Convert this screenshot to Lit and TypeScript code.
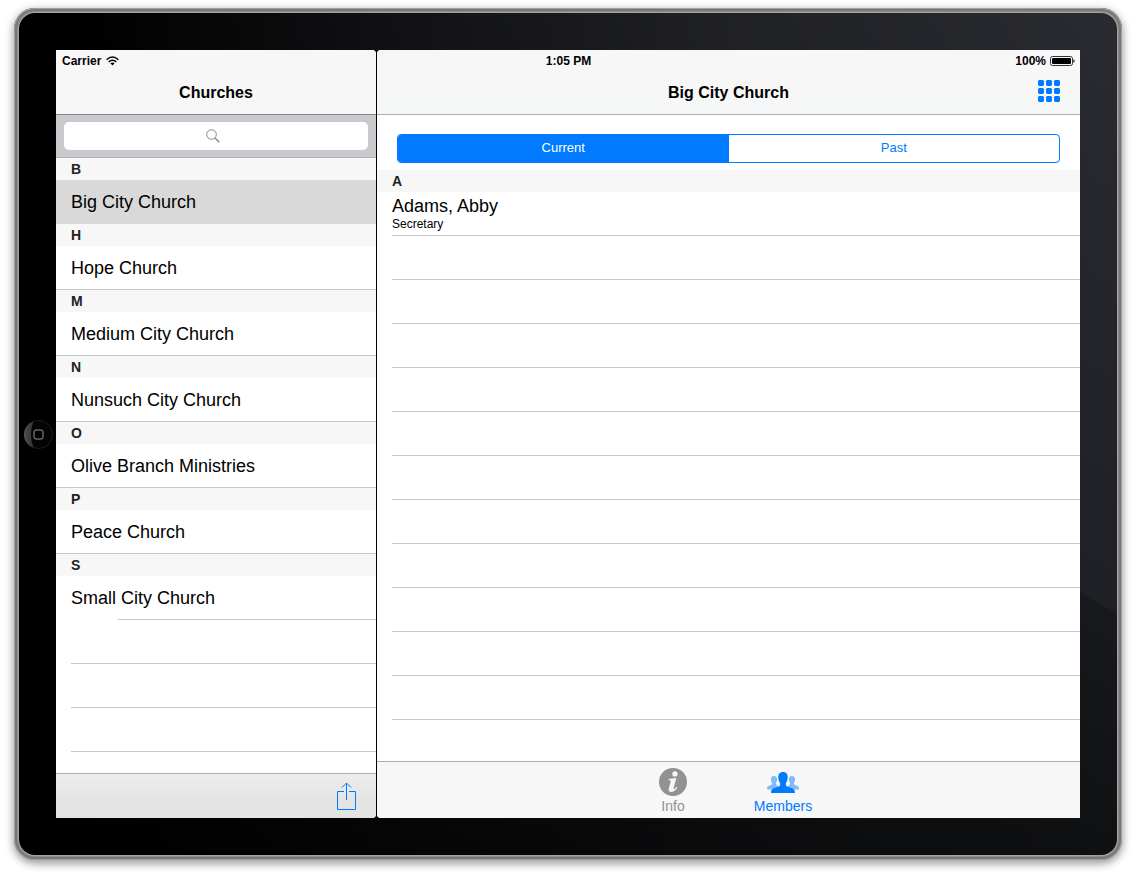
import { LitElement, html, css, nothing } from "lit";
import { customElement, state } from "lit/decorators.js";
import { classMap } from "lit/directives/class-map.js";

const CHURCHES = [
  { letter: "B", name: "Big City Church" },
  { letter: "H", name: "Hope Church" },
  { letter: "M", name: "Medium City Church" },
  { letter: "N", name: "Nunsuch City Church" },
  { letter: "O", name: "Olive Branch Ministries" },
  { letter: "P", name: "Peace Church" },
  { letter: "S", name: "Small City Church" },
];

@customElement("app-root")
export class AppRoot extends LitElement {
  static styles = css`
    :host {
      display: block;
      font-family: "Liberation Sans", Arial, sans-serif;
      color: #000;
      background: #fff;
    }
    * {
      box-sizing: border-box;
    }
    button {
      font: inherit;
      color: inherit;
      margin: 0;
      padding: 0;
      border: 0;
      background: none;
      cursor: pointer;
    }
    svg {
      display: block;
    }
    h1,
    h2,
    h3 {
      margin: 0;
    }

    /* tablet shell */
    .stage {
      display: flex;
      min-height: 100vh;
      padding: 8px 14px 20px;
    }
    .rim {
      flex: 1;
      display: flex;
      padding: 5px;
      border-radius: 21px;
      background: #747474;
      box-shadow:
        inset 0 0 0 1px #a0a0a0,
        inset 0 0 0 3px #787878,
        inset 0 0 0 4px #8c8c8c,
        inset 0 0 0 6px #a4a4a4,
        0 3px 9px 1px rgba(0, 0, 0, 0.38);
    }
    .bezel {
      flex: 1;
      display: grid;
      grid-template-columns: 37px minmax(0, 1fr) 37px;
      padding: 37px 0;
      border-radius: 16px;
      background:
        linear-gradient(90deg, #000 5%, rgba(0, 0, 0, 0.5) 35%, rgba(0, 0, 0, 0.15) 65%, transparent),
        linear-gradient(210deg, #2a2b30, #1f2025 40.6%, #17191c 40.8%, #0f1012 58%, #080808);
    }
    .home {
      align-self: center;
      justify-self: end;
      width: 29px;
      height: 29px;
      margin-right: 3px;
    }

    /* screen */
    .screen {
      position: relative;
      display: grid;
      grid-template-columns: 320px minmax(0, 1fr);
      gap: 1px;
      background: #000;
    }
    .status {
      position: absolute;
      inset: 0 0 auto;
      display: grid;
      grid-template-columns: 1fr auto 1fr;
      height: 20px;
      padding: 0 5px 0 6px;
      align-items: center;
      font-size: 12px;
      font-weight: bold;
      line-height: 22px;
      pointer-events: none;
    }
    .side {
      display: flex;
      align-items: center;
      gap: 5px;
    }
    .right {
      justify-content: flex-end;
      gap: 4px;
    }
    .pane {
      display: flex;
      flex-direction: column;
      background: #fff;
    }
    .master {
      border-radius: 0 4px 4px 0;
      overflow: hidden;
    }
    .detail {
      border-radius: 4px 0 0 4px;
      overflow: hidden;
    }
    .bar {
      display: grid;
      grid-template-columns: 1fr auto 1fr;
      align-items: center;
      height: 65px;
      padding: 20px 20px 0;
      border-bottom: 1px solid #adadaf;
      background: linear-gradient(#f7f7f7 60%, #f5f7f8);
    }
    .master .bar {
      border-color: #848487;
      background: #f7f7f7;
    }
    .bar h1,
    .bar h2 {
      grid-column: 2;
      padding-top: 2px;
      font-size: 16px;
      font-weight: bold;
      line-height: 20px;
    }
    .bar button {
      justify-self: end;
      padding-bottom: 2px;
    }
    .search {
      position: relative;
      display: block;
      padding: 7px 8px;
      border-bottom: 1px solid #b2b2b5;
      background: #c9c9ce;
    }
    .search input {
      display: block;
      width: 100%;
      height: 28px;
      padding: 0 10px;
      border: 0;
      border-radius: 5px;
      background: #fff;
      font: inherit;
      font-size: 14px;
      outline: none;
      appearance: none;
    }
    .search svg {
      position: absolute;
      inset: 14px 0 auto;
      margin: 0 auto;
      left: -7px;
      pointer-events: none;
    }
    .letter {
      height: 22px;
      padding-left: 15px;
      font-size: 14px;
      font-weight: bold;
      line-height: 22px;
      color: #222;
      background: #f7f7f7;
    }
    .row {
      display: block;
      width: 100%;
      height: 44px;
      padding: 1px 0 0 15px;
      border-bottom: 1px solid #c8c7cc;
      font-size: 18px;
      line-height: 40px;
      text-align: left;
    }
    .selected {
      background: #d9d9d9;
      border-color: #d9d9d9;
    }
    .last {
      border-color: transparent;
      background: linear-gradient(#c8c7cc, #c8c7cc) 62px 100% / 100% 1px no-repeat border-box;
    }
    .blanks {
      flex: 1 0 0;
      margin-left: 15px;
      background: repeating-linear-gradient(transparent 0 43px, #c8c7cc 43px 44px);
    }
    .toolbar {
      display: flex;
      justify-content: flex-end;
      align-items: center;
      height: 45px;
      padding: 0 19px 0 0;
      border-top: 1px solid #adadad;
      background: linear-gradient(#ededed, #e4e4e4 60%);
    }
    .segments {
      display: grid;
      grid-template-columns: 1fr 1fr;
      height: 29px;
      margin: 19px 20px 7px;
      border: 1px solid #007aff;
      border-radius: 4px;
      overflow: hidden;
      font-size: 13px;
      line-height: 24px;
      color: #007aff;
    }
    .segments button {
      padding-bottom: 2px;
    }
    .on {
      color: #fff;
      background: #007aff;
    }
    .person {
      display: flex;
      flex-direction: column;
      height: 44px;
      margin-left: 15px;
      padding-top: 3px;
      border-bottom: 1px solid #c8c7cc;
      font-size: 18px;
      line-height: 22px;
      text-align: left;
    }
    .role {
      font-size: 12px;
      line-height: 14px;
    }
    .tabs {
      display: flex;
      justify-content: center;
      gap: 34px;
      height: 57px;
      padding-right: 1px;
      border-top: 1px solid #adadad;
      background: #f7f7f7;
    }
    .tabs button {
      display: flex;
      flex-direction: column;
      align-items: center;
      width: 76px;
      padding-top: 6px;
      gap: 2px;
      font-size: 14px;
      line-height: 16px;
      color: #929292;
    }
    .tabs .active {
      color: #007aff;
    }
  `;

  @state() private church = "Big City Church";
  @state() private period = "Current";
  @state() private tab = "Members";

  private segment(name: string) {
    const on = this.period === name;
    return html`<button class=${classMap({ on })} aria-pressed=${on} @click=${() => (this.period = name)}>${name}</button>`;
  }

  private tabButton(name: string, icon: unknown) {
    const active = this.tab === name;
    return html`<button class=${classMap({ active })} aria-current=${active ? "page" : nothing} @click=${() => (this.tab = name)}>
      ${icon}<span>${name}</span>
    </button>`;
  }

  private infoIcon = html`<svg width="28" height="28" viewBox="0 0 28 28" fill="currentColor" aria-hidden="true">
    <circle cx="14" cy="14" r="14" />
    <g fill="#f7f7f7">
      <circle cx="15.900" cy="5.900" r="2.600" />
      <path d="M9.600 10.900 17.400 10.100 14.600 20c-.3 1.200.3 1.400 1 .8.600-.5 1.100-1.200 1.700-2l.9.600c-1.600 2.800-3.500 4.500-5.900 4.500-2.200 0-3.100-1.400-2.500-3.500L11.700 13.600c.3-1.100-.1-1.500-2.300-1.600z" />
    </g>
  </svg>`;

  private membersIcon = html`<svg width="32" height="28" viewBox="0 1 32 28" fill="currentColor" aria-hidden="true">
    <g fill="#80bbfb">
      <path d="M7 9c2.200 0 3.200 1.500 3.100 3.600 0 1.700-.6 2.700-1.200 3.500-.1 1.500.4 2 2.100 2.600V22.500H0c0-2.700.6-3.200 2.700-3.900 1.900-.6 2.600-1 2.400-2.500-.6-.8-1.200-1.800-1.200-3.500C3.800 10.500 4.800 9 7 9z" />
      <path d="M25 9c-2.200 0-3.200 1.500-3.100 3.600 0 1.700.6 2.700 1.200 3.500.1 1.500-.4 2-2.100 2.600V22.500h11c0-2.700-.6-3.200-2.700-3.900-1.900-.6-2.600-1-2.400-2.500.6-.8 1.200-1.800 1.200-3.500C28.200 10.500 27.200 9 25 9z" />
    </g>
    <path d="M16 5c3.300 0 4.900 2.200 4.700 5.400-.1 2.500-.8 4.200-1.800 5.500v2.300c.2.900 1.300 1.300 3.300 2 3.600 1.200 5.800 1.700 5.800 5.800H4c0-4.100 2.200-4.600 5.800-5.800 2-.7 3.100-1.100 3.300-2v-2.300c-1-1.300-1.700-3-1.800-5.500C11.100 7.200 12.700 5 16 5z" />
  </svg>`;

  render() {
    return html`
      <div class="stage">
        <div class="rim">
          <div class="bezel">
            <button class="home" aria-label="Home">
              <svg width="29" height="29" viewBox="0 0 29 29">
                <defs>
                  <linearGradient id="glow" x1="0" x2="1">
                    <stop offset="0" stop-color="#505050" />
                    <stop offset="1" stop-color="#303030" />
                  </linearGradient>
                </defs>
                <circle cx="14.500" cy="14.500" r="14" fill="#040404" stroke="#1e1e1e" />
                <path d="M9.500 1.200A14 14 0 0 0 9.500 27.800Q4.500 14.500 9.500 1.200z" fill="url(#glow)" />
                <rect x="10" y="10" width="9" height="9" rx="2" fill="#000" stroke="#9a9a9a" />
              </svg>
            </button>
            <main class="screen">
              <section class="pane master">
                <header class="bar"><h1>Churches</h1></header>
                <label class="search">
                  <input type="search" aria-label="Search churches" />
                  <svg width="14" height="14" viewBox="0 0 14 14" fill="none" stroke="#85858a">
                    <circle cx="5.500" cy="5.500" r="4.800" />
                    <path d="m9 9 4.300 4.300" stroke-width="1.400" />
                  </svg>
                </label>
                ${CHURCHES.map(
                  (c, i) => html`
                    <h3 class="letter">${c.letter}</h3>
                    <button
                      class=${classMap({ row: true, selected: c.name === this.church, last: i === CHURCHES.length - 1 })}
                      @click=${() => (this.church = c.name)}
                    >
                      ${c.name}
                    </button>
                  `,
                )}
                <div class="blanks"></div>
                <footer class="toolbar">
                  <button aria-label="Share">
                    <svg width="20" height="28" viewBox="0 0 20 28" fill="none" stroke="#007aff">
                      <path d="M7 9.500H.5v18h18v-18H12M9.500 18V1.500M5 5.500l4.500-4.500L14 5.500" />
                    </svg>
                  </button>
                </footer>
              </section>
              <section class="pane detail">
                <header class="bar">
                  <h2>${this.church}</h2>
                  <button aria-label="Grid">
                    <svg width="22" height="22" viewBox="0 0 22 22" fill="#007aff">
                      <path d="M1 0h4l1 1v4l-1 1H1L0 5V1zm8 0h4l1 1v4l-1 1H9L8 5V1zm8 0h4l1 1v4l-1 1h-4l-1-1V1zM1 8h4l1 1v4l-1 1H1l-1-1V9zm8 0h4l1 1v4l-1 1H9l-1-1V9zm8 0h4l1 1v4l-1 1h-4l-1-1V9zM1 16h4l1 1v4l-1 1H1l-1-1v-4zm8 0h4l1 1v4l-1 1H9l-1-1v-4zm8 0h4l1 1v4l-1 1h-4l-1-1v-4z" />
                    </svg>
                  </button>
                </header>
                <div class="segments" role="group" aria-label="Period">${this.segment("Current")}${this.segment("Past")}</div>
                <h3 class="letter">A</h3>
                <button class="person"><span>Adams, Abby</span><span class="role">Secretary</span></button>
                <div class="blanks"></div>
                <nav class="tabs">${this.tabButton("Info", this.infoIcon)}${this.tabButton("Members", this.membersIcon)}</nav>
              </section>
              <div class="status">
                <span class="side">
                  Carrier
                  <svg width="13" height="10" viewBox="0 0 13 10" fill="none" stroke="#000" stroke-width="1.500">
                    <path d="M.6 3.700Q6.500-1.600 12.400 3.700M2.700 5.900Q6.500 2.500 10.300 5.900" />
                    <path d="M4.400 7.300Q6.500 5.600 8.600 7.300L6.500 9.500z" fill="#000" stroke="none" />
                  </svg>
                </span>
                <span>1:05 PM</span>
                <span class="side right">
                  100%
                  <svg width="25" height="10" viewBox="0 0 25 10">
                    <rect x=".5" y=".5" width="22" height="9" rx="2" fill="none" stroke="#333" />
                    <rect x="2" y="2" width="19" height="6" rx="1" />
                    <path d="M23.500 3q1.200 1 1.200 2t-1.200 2z" />
                  </svg>
                </span>
              </div>
            </main>
          </div>
        </div>
      </div>
    `;
  }
}
